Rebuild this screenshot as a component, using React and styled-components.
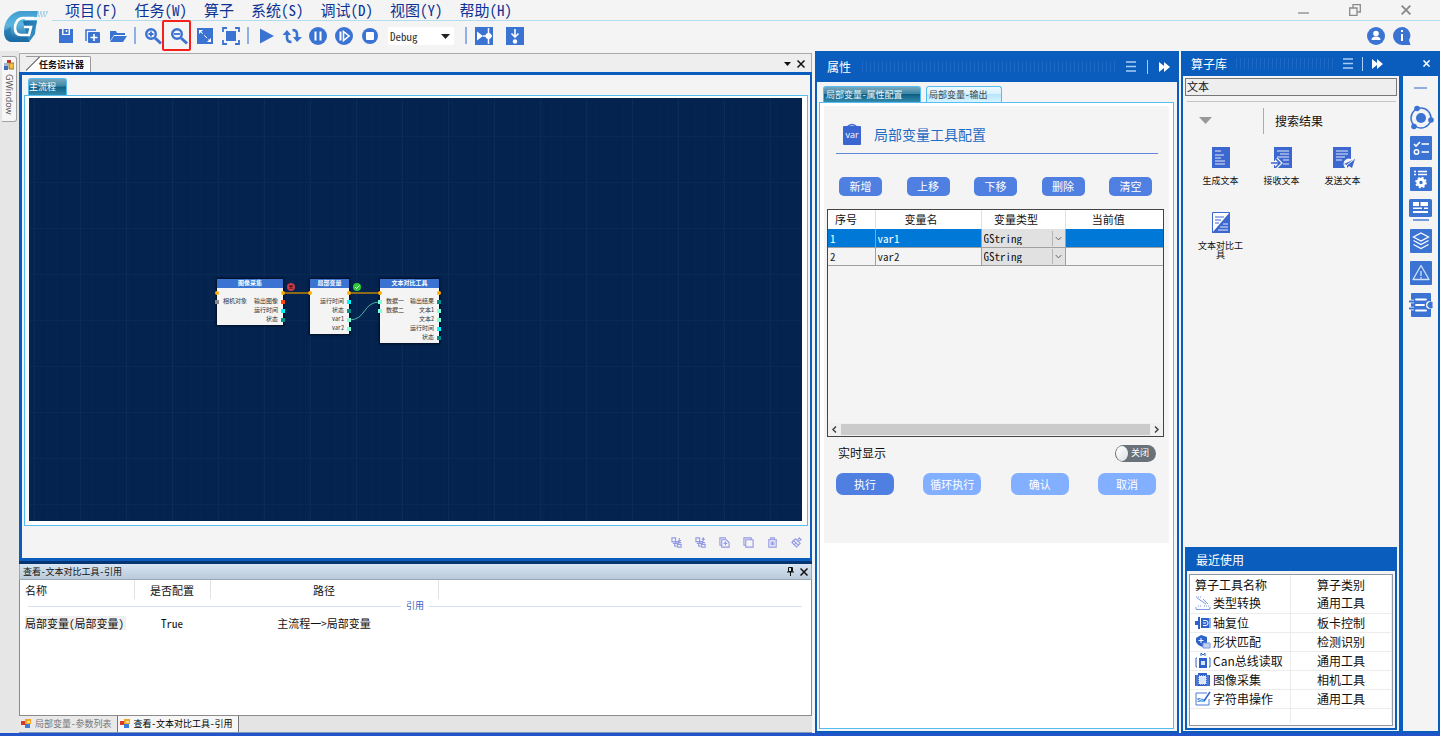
import { useState } from "react";
import styled, { createGlobalStyle, css } from "styled-components";

const BLUE = "#0a5cbd";
const ICON = "#3b73d3";
const SKY = "#56bdf3";
const PAPER = "#f4f4f4";

const GlobalStyle = createGlobalStyle`
  * { box-sizing: border-box; }
  body {
    margin: 0;
    font-family: "Noto Sans Mono CJK SC", "Noto Sans CJK SC", "Liberation Mono", monospace;
    font-size: 11px;
    line-height: 16px;
    color: #111;
    background: ${PAPER};
  }
  button, input, select {
    font: inherit;
    color: inherit;
    margin: 0;
    padding: 0;
    border: 0;
    background: none;
    border-radius: 0;
  }
  ul { list-style: none; margin: 0; padding: 0; }
  h1, h2, h3 { margin: 0; font-weight: 400; }
  svg { display: block; flex: none; }
  table { border-collapse: collapse; }
  th, td { padding: 0; font-weight: 400; }
`;

/* ---------- window ---------- */

const Window = styled.div`
  display: flex;
  flex-direction: column;
  height: 100vh;
  overflow: hidden;
  border-bottom: 3px solid #2253c9;
`;

const Header = styled.header`
  display: flex;
  height: 51px;
  flex: none;
`;

const LogoBox = styled.div`
  width: 52px;
  padding: 10px 0 0 3px;
`;

const HeaderMain = styled.div`
  flex: 1;
  display: flex;
  flex-direction: column;
`;

const MenuBar = styled.nav`
  display: flex;
  align-items: center;
  gap: 17px;
  height: 21px;
  padding-left: 13px;
  border-bottom: 1px solid #b3ddee;
`;

const MenuItem = styled.button`
  font-size: 15px;
  line-height: 20px;
  color: #0b3394;
  white-space: nowrap;
`;

const WindowControls = styled.div`
  display: flex;
  margin-left: auto;
  padding-right: 19px;
  gap: 20px;
`;

const WindowButton = styled.button`
  display: flex;
  align-items: center;
  justify-content: center;
  width: 31px;
  height: 20px;
`;

const ToolBar = styled.div`
  display: flex;
  align-items: center;
  height: 29px;
  padding-left: 1px;
`;

const ToolButton = styled.button`
  position: relative;
  display: flex;
  align-items: center;
  justify-content: center;
  width: 26px;
  height: 26px;

  ${({ $marked }) =>
    $marked &&
    css`
      &::after {
        content: "";
        position: absolute;
        inset: -3px 1px -2px -4px;
        border: 2px solid #f5201c;
        border-radius: 2px;
      }
    `}
`;

const ToolSeparator = styled.span`
  width: 2px;
  height: 17px;
  margin: 0 4px 0 3px;
  background: #8fb0e6;
`;

const StepTools = styled.div`
  display: flex;
  gap: 5px;
`;

const ModeSelect = styled.label`
  position: relative;
  display: flex;
  margin: 0 8px 0 5px;

  select {
    appearance: none;
    width: 66px;
    height: 18px;
    padding-left: 2px;
    font-size: 11px;
    line-height: 16px;
    background: #fff;
    color: #333;
  }

  svg {
    position: absolute;
    right: 4px;
    top: 7px;
    pointer-events: none;
  }
`;

const UserTools = styled.div`
  display: flex;
  margin-left: auto;
  padding-right: 25px;
`;

const Main = styled.main`
  display: flex;
  flex: 1;
  min-height: 0;
`;

/* ---------- left strip ---------- */

const SideStrip = styled.aside`
  width: 19px;
  flex: none;
  padding: 5px 0 0 2px;
  background: #e6e6e6;
`;

const SideTab = styled.button`
  display: flex;
  flex-direction: column;
  align-items: center;
  gap: 4px;
  width: 15px;
  height: 66px;
  padding-top: 3px;
  background: #f6f6f6;
  border: 1px solid #a0a0a0;
  border-left: 0;
  border-radius: 0 3px 3px 0;
  font-family: "Open Sans", sans-serif;
  font-size: 9px;
  line-height: 12px;
  color: #555;

  span { writing-mode: vertical-rl; }
`;

/* ---------- designer ---------- */

const Workspace = styled.section`
  flex: 1;
  min-width: 0;
  display: flex;
  flex-direction: column;
  padding-top: 2px;
  margin-right: 3px;
`;

const DocTabs = styled.div`
  display: flex;
  align-items: flex-end;
  height: 19px;
  padding: 0 6px;
  border: 1px solid #aaa;
  border-bottom: 0;
  background: #eee;
`;

const DocTab = styled.button`
  height: 16px;
  padding: 0 6px 0 13px;
  background: linear-gradient(135deg, transparent 9px, #888 9px, #888 10px, #fff 10px);
  border-top: 1px solid #999;
  border-right: 1px solid #999;
  border-radius: 0 2px 0 0;
  font-size: 9px;
  font-weight: 700;
  line-height: 14px;
`;

const DockControls = styled.div`
  display: flex;
  align-items: center;
  gap: 4px;
  height: 17px;
  margin-left: auto;
`;

const PlainButton = styled.button`
  display: flex;
  align-items: center;
  justify-content: center;
  min-width: 9px;
  height: 12px;
`;

const DesignerFrame = styled.div`
  flex: 1;
  min-height: 0;
  display: flex;
  flex-direction: column;
  padding: 3px 2px 0;
  border: 3px solid ${BLUE};
  border-right-width: 2px;
  background: ${PAPER};
`;

const FlowTab = styled.button`
  align-self: flex-start;
  width: 39px;
  height: 17px;
  margin-left: 4px;
  border: 1px solid ${SKY};
  border-bottom: 0;
  border-radius: 3px 3px 0 0;
  background: linear-gradient(#78a8bd, #3c86a4 45%, #0f5e84 50%, #338bab);
  color: #fff;
  font-size: 9px;
  line-height: 16px;
  text-align: left;
`;

const CanvasBox = styled.div`
  flex: 1;
  min-height: 0;
  display: flex;
  padding: 2px 5px 4px 4px;
  border: 1px solid ${SKY};
  background: #fff;
`;

const Canvas = styled.div`
  position: relative;
  flex: 1;
  overflow: hidden;
  background-color: #04244f;
  background-image:
    repeating-linear-gradient(90deg, transparent 0 5px, #0a2c57 5px 6px, transparent 6px 46px),
    repeating-linear-gradient(transparent 0 38px, #082a55 38px 39px, transparent 39px 46px),
    repeating-linear-gradient(90deg, #052651 0 1px, transparent 1px 9px);
`;

const Wires = styled.svg`
  position: absolute;
  left: 0;
  top: 0;
`;

const NodeBox = styled.article`
  position: absolute;
  top: 181px;
  left: ${({ $x }) => $x}px;
  width: ${({ $w }) => $w}px;
  padding-bottom: 1px;
  background: ${PAPER};
  box-shadow: 0 0 2px 1px #010d22;
  font-size: 6px;
  line-height: 8px;
  color: #333;
`;

const NodeTitle = styled.h3`
  height: 9px;
  background: ${ICON};
  color: #fff;
  font-size: 6px;
  font-weight: 700;
  line-height: 8px;
  text-align: center;
`;

const NodeRow = styled.div`
  position: relative;
  display: flex;
  justify-content: space-between;
  height: 9px;
  padding: 0 5px 0 6px;
`;

const Port = styled.i`
  position: absolute;
  top: 3px;
  ${({ $side }) => $side}: -2px;
  width: 4px;
  height: 4px;
  background: ${({ $color }) => $color};
  border-radius: ${({ $round }) => ($round ? "50%" : 0)};
`;

const CanvasTools = styled.div`
  display: flex;
  justify-content: flex-end;
  align-items: center;
  gap: 8px;
  height: 32px;
  padding-right: 4px;
`;

const CanvasTool = styled.button`
  display: flex;
  align-items: center;
  justify-content: center;
  width: 16px;
  height: 16px;
`;

/* ---------- reference dock ---------- */

const Dock = styled.section`
  height: 172px;
  flex: none;
  display: flex;
  flex-direction: column;
  border-top: 3px solid #073572;
`;

const DockTitle = styled.div`
  display: flex;
  align-items: center;
  justify-content: space-between;
  height: 16px;
  padding: 0 3px;
  background: linear-gradient(#d8e5f2, #b9cad9);
  border: 1px solid #9aa8b5;
  border-top: 0;
  font-size: 9px;

  div { display: flex; gap: 4px; }
`;

const DockBody = styled.div`
  flex: 1;
  background: #fff;
  border: 1px solid #8b8b8b;
  border-top: 0;
`;

const RefTable = styled.table`
  width: 100%;
  table-layout: fixed;
  font-size: 11px;
  line-height: 14px;
  text-align: center;

  thead th {
    height: 19px;
    border-right: 1px solid #e2e2e2;
  }
  thead th:last-child { border: 0; }
  th:first-child, td:first-child {
    text-align: left;
    padding-left: 5px;
  }
  tbody td { height: 19px; }
  tbody td[colspan] { height: 14px; }
`;

const GroupLine = styled.div`
  display: flex;
  align-items: center;
  gap: 5px;
  height: 13px;
  margin: 0 9px 0 3px;
  font-size: 9px;
  line-height: 12px;
  color: #2d5fc8;

  &::before, &::after {
    content: "";
    flex: 1;
    height: 1px;
    background: #d5e0f2;
  }
`;

const RowName = styled.span`
  display: inline-block;
  width: 101px;
  background: #f0f0f0;
`;

const DockTabs = styled.div`
  display: flex;
  height: 17px;
  background: #e4e4e4;
  border-bottom: 1px solid #7d99b8;
`;

const DockTab = styled.button`
  display: flex;
  align-items: center;
  gap: 4px;
  padding: 0 5px 0 2px;
  font-size: 9px;
  line-height: 14px;
  color: ${({ $active }) => ($active ? "#000" : "#777")};
  background: ${({ $active }) => ($active ? "#f6f6f6" : "#e9e9e9")};
  border-right: 1px solid #777;
`;

/* ---------- properties ---------- */

const PropertyPanel = styled.section`
  width: 364px;
  flex: none;
  display: flex;
  flex-direction: column;
  margin-right: 2px;
  border: 2px solid ${BLUE};
  border-top: 0;
  background: ${PAPER};
`;

const PanelHeader = styled.div`
  display: flex;
  align-items: center;
  gap: 11px;
  height: ${({ $h }) => $h}px;
  padding: 0 7px 0 ${({ $left }) => $left}px;
  background: ${BLUE};
  color: #fff;
`;

const PanelTitle = styled.h2`
  font-size: 12px;
  line-height: 18px;
`;

const Grip = styled.span`
  flex: 1;
  height: 11px;
  background: repeating-linear-gradient(90deg, #1e69c6 0 1px, transparent 1px 4px);
`;

const HeaderRule = styled.span`
  width: 1px;
  height: 14px;
  background: #a9cdf5;
`;

const PageTabs = styled.div`
  display: flex;
  gap: 5px;
  padding: 4px 0 0 6px;
`;

const PageTab = styled.button`
  width: ${({ $active }) => ($active ? 98 : 76)}px;
  height: 16px;
  padding-left: 2px;
  border: 1px solid ${SKY};
  border-bottom: 0;
  border-radius: 3px 3px 0 0;
  font-size: 9px;
  line-height: 15px;
  text-align: left;
  color: ${({ $active }) => ($active ? "#e8f4f8" : "#444")};
  background: ${({ $active }) =>
    $active
      ? "linear-gradient(#78a8bd, #3c86a4 45%, #0f5e84 50%, #338bab)"
      : "linear-gradient(#eefaff, #d8f2fd 45%, #b6e6fb 50%, #d9f4ff)"};
`;

const PageFrame = styled.div`
  flex: 1;
  margin: 0 3px 2px 2px;
  padding: 3px 4px;
  border: 1px solid ${SKY};
  background: #fff;
`;

const ConfigForm = styled.form`
  height: 437px;
  padding: 0 5px 0 3px;
  background: ${PAPER};
`;

const ConfigTitle = styled.div`
  display: flex;
  align-items: center;
  gap: 12px;
  height: 48px;
  margin: 0 6px 0 9px;
  padding: 8px 0 0 6px;
  border-bottom: 1px solid #5f88dc;

  h2 {
    font-size: 14px;
    line-height: 20px;
    color: #1d6cc5;
  }
`;

const RowActions = styled.div`
  display: flex;
  justify-content: space-between;
  padding: 23px 12px 13px;
`;

const SmallButton = styled.button`
  width: 43px;
  height: 19px;
  border-radius: 5px;
  background: #4f7fe0;
  color: #fff;
  line-height: 17px;
`;

const VarBox = styled.div`
  display: flex;
  flex-direction: column;
  height: 228px;
  border: 1px solid #444;
`;

const VarTable = styled.table`
  width: 100%;
  table-layout: fixed;
  font-size: 11px;
  line-height: 14px;

  th {
    height: 19px;
    padding-bottom: 2px;
    background: #fff;
    border-right: 1px solid #e0e0e0;
  }
  th:first-child { text-align: left; padding-left: 7px; }
  th:nth-child(2), th:nth-child(3) { padding-right: 14px; }
  th:last-child { padding-right: 12px; border: 0; }
`;

const VarRow = styled.tr`
  background: ${({ $selected }) => ($selected ? "#0078d7" : PAPER)};
  color: ${({ $selected }) => ($selected ? "#fff" : "#222")};

  td {
    height: 18px;
    padding-left: 2px;
    border-right: 1px solid #a0a0a0;
    border-bottom: 1px solid #a0a0a0;
  }
  td:last-child { border-right: 0; }
  td:nth-child(3) { padding: 0; background: #e1e1e1; }
`;

const TypeSelect = styled.label`
  position: relative;
  display: block;

  select {
    display: block;
    appearance: none;
    width: 100%;
    height: 16px;
    padding-left: 2px;
    background: #e1e1e1;
    color: #111;
  }
  svg {
    position: absolute;
    right: 0;
    top: 1px;
    border-left: 1px solid #b5b5b5;
    pointer-events: none;
  }
`;

const ScrollBar = styled.div`
  display: flex;
  align-items: center;
  height: 13px;
  margin-top: auto;
  background: #f0f0f0;

  div {
    flex: 1;
    height: 11px;
    background: #cbcbcb;
  }
`;

const LiveRow = styled.div`
  display: flex;
  align-items: center;
  justify-content: space-between;
  height: 33px;
  padding: 0 8px 1px 11px;
  font-size: 12px;
`;

const Toggle = styled.label`
  display: flex;
  align-items: center;
  justify-content: space-between;
  width: 41px;
  height: 17px;
  padding: 0 7px 0 1px;
  border-radius: 9px;
  background: #687278;
  color: #fff;
  font-size: 9px;

  input {
    appearance: none;
    width: 12px;
    height: 15px;
    border-radius: 50%;
    background: linear-gradient(135deg, #fff, #dde2e6);
  }
`;

const FormActions = styled.div`
  display: flex;
  justify-content: space-between;
  padding: 3px 8px 0 9px;
`;

const ActionButton = styled.button`
  width: 58px;
  height: 22px;
  border-radius: 7px;
  background: ${({ $primary }) => ($primary ? "#4f7fe0" : "#82afff")};
  color: #fff;
  line-height: 20px;
`;

/* ---------- library ---------- */

const LibraryPanel = styled.section`
  width: 259px;
  flex: none;
  display: flex;
  flex-direction: column;
  border: 2px solid ${BLUE};
  border-top: 0;
  background: ${PAPER};
`;

const LibraryHeader = styled(PanelHeader)`
  gap: 9px;

  button:last-child { margin-left: 30px; }
`;

const LibraryBody = styled.div`
  flex: 1;
  min-height: 0;
  display: flex;
`;

const LibraryMain = styled.div`
  flex: 1;
  display: flex;
  flex-direction: column;
  padding: 2px 2px 1px;
`;

const SearchInput = styled.input`
  width: 100%;
  height: 18px;
  padding: 0 1px 2px;
  border: 1px solid #777;
  background: #eee;
  line-height: 14px;
`;

const ResultHead = styled.div`
  display: flex;
  align-items: center;
  height: 38px;
  margin: 5px 1px 0 2px;
  padding-left: 12px;
  border-top: 1px solid #c4c4c4;

  h3 {
    margin-left: 51px;
    padding-left: 11px;
    border-left: 1px solid #8fb0e6;
    font-size: 12px;
    line-height: 26px;
  }
`;

const ToolGrid = styled.ul`
  display: grid;
  grid-template-columns: repeat(3, 61px);
  padding: 8px 0 0 5px;
`;

const ToolItem = styled.li`
  height: 65px;

  button {
    display: flex;
    flex-direction: column;
    align-items: center;
    width: 61px;
    gap: 7px;
    font-size: 9px;
    line-height: 9px;
  }
  span { width: 46px; }
`;

const Recent = styled.section`
  display: flex;
  flex-direction: column;
  height: 183px;
  margin-top: auto;
  border: 2px solid ${BLUE};
  border-top: 0;
  background: ${PAPER};

  h2 {
    height: 24px;
    flex: none;
    padding: 2px 0 0 9px;
    background: ${BLUE};
    color: #fff;
    font-size: 12px;
    line-height: 22px;
  }
`;

const RecentBox = styled.div`
  flex: 1;
  margin: 3px 2px 2px;
  border: 1px solid #9098a2;
  background: #fff;
`;

const RecentTable = styled.table`
  width: 100%;
  table-layout: fixed;
  font-family: "Noto Sans CJK SC", sans-serif;
  font-size: 12px;
  line-height: 18px;

  th, td {
    height: 19px;
    border-bottom: 1px solid #ececec;
    border-right: 1px solid #ececec;
    text-align: center;
    white-space: nowrap;
  }
  th { border-bottom: 0; }
  th:first-child, td:first-child { text-align: left; padding-left: 5px; }
  tr:last-child td { border-bottom: 0; height: 15px; }
`;

const RecentName = styled.span`
  display: flex;
  align-items: center;
  gap: 2px;
`;

const Rail = styled.nav`
  display: flex;
  flex-direction: column;
  align-items: center;
  width: 39px;
  padding-top: 5px;
  border-left: 4px solid ${BLUE};
`;

const RailButton = styled.button`
  display: flex;
  align-items: center;
  justify-content: center;
  width: 30px;
  height: ${({ $h }) => $h}px;
`;

const RailFold = styled(RailButton)`
  margin-bottom: 8px;
`;

/* ---------- drawings ---------- */

const Logo = () => (
  <svg width="46" height="34" viewBox="0 0 46 34">
    <defs>
      <linearGradient id="logoFill" x1="0" y1="0" x2="0" y2="1">
        <stop offset="0" stopColor="#3f9dcf" />
        <stop offset=".45" stopColor="#5cb6de" />
        <stop offset="1" stopColor="#175f9b" />
      </linearGradient>
      <linearGradient id="logoSide" x1="0" y1="0" x2="1" y2="1">
        <stop offset="0" stopColor="#1b6ba8" />
        <stop offset="1" stopColor="#3f9bd0" />
      </linearGradient>
    </defs>
    <path d="M35 1H17C8 2 1 11 1 21c0 7 3 11 8 11h17l6-8 2-14H22V7h12z" fill="url(#logoFill)" />
    <path d="M20 11h14l-3 13-5 8-2-6z" fill="url(#logoSide)" />
    <path d="M1 21c0 7 3 11 8 11h17l-2-5H12c-4 0-5-5-4-10z" fill="#1c70ac" opacity=".6" />
    <path d="M31 8H20c-5 0-8 5-8 10 0 4 2 7 6 7h8l2-8h-7" fill="none" stroke="#fff" strokeWidth="2.600" />
    <path d="M34 2h11M34 4h10M35 6h8" stroke="#74b9de" strokeDasharray="2 1" />
  </svg>
);

const toolShapes = {
  save: (
    <>
      <path d="M2 2h14v14H2z" fill={ICON} />
      <path d="M5 2v6h8V2" fill={PAPER} />
      <path d="M6.500 2v5h5V2" fill={ICON} />
      <path d="M9.500 3v2" stroke="#fff" strokeWidth="1.500" />
    </>
  ),
  add: (
    <>
      <path d="M13 3H3v11" fill="none" stroke={ICON} strokeWidth="1.500" />
      <rect x="5" y="5" width="12" height="11" rx="1" fill={ICON} />
      <path d="M11 7v7M7.500 10.500h7" stroke="#fff" strokeWidth="1.600" />
    </>
  ),
  open: <path d="M1 4h6l1 2h8v2H5l-4 6zM5 9h13l-4 6H1z" fill={ICON} />,
  zoomIn: (
    <g fill="none" stroke={ICON} strokeWidth="2.400">
      <circle cx="7" cy="7" r="4.800" />
      <path d="M11 11l6 5.500" strokeWidth="3" />
      <path d="M7 4.500v5M4.500 7h5" strokeWidth="1.800" />
    </g>
  ),
  zoomOut: (
    <g fill="none" stroke={ICON} strokeWidth="2.400">
      <circle cx="7" cy="7" r="4.800" />
      <path d="M11 11l6 5.500" strokeWidth="3" />
      <path d="M4 7h6" strokeWidth="1.800" />
    </g>
  ),
  scale: (
    <>
      <path d="M1 1h16v16H1z" fill={ICON} />
      <path d="M3 3h4L3 7zM15 15h-4l4-4z" fill="#fff" />
      <path d="M4 4l10 10" stroke="#fff" strokeDasharray="4 2" />
    </>
  ),
  fit: (
    <>
      <path d="M4 4h10v10H4z" fill={ICON} />
      <path d="M1 5V1h4M13 1h4v4M17 13v4h-4M5 17H1v-4" fill="none" stroke={ICON} strokeWidth="1.800" />
    </>
  ),
  run: <path d="M3 1.500L17 9 3 16.500z" fill={ICON} />,
  loop: (
    <>
      <path d="M4 7v4q0 4 4.500 4M14 11V7q0-4-4.500-4" fill="none" stroke={ICON} strokeWidth="2.600" />
      <path d="M-.5 8L4 3l4 5zM10 10h9l-5 5z" fill={ICON} />
    </>
  ),
  pause: (
    <>
      <circle cx="9" cy="9" r="9" fill={ICON} />
      <path d="M6.500 4.500v9M11.500 4.500v9" stroke="#fff" strokeWidth="2" />
    </>
  ),
  step: (
    <>
      <circle cx="9" cy="9" r="9" fill={ICON} />
      <path d="M5.500 4.500v9" stroke="#fff" strokeWidth="2" />
      <path d="M8.500 4.500L14 9l-5.500 4.500z" fill="none" stroke="#fff" strokeWidth="1.600" />
    </>
  ),
  stop: (
    <>
      <circle cx="9" cy="9" r="8" fill={ICON} />
      <rect x="5" y="5" width="8" height="8" rx="1" fill="#fff" />
    </>
  ),
  breakpoint: (
    <>
      <path d="M0 0h18v18H0z" fill={ICON} />
      <path d="M2 4.500L8 9l-6 4.500z" fill="#fff" />
      <path d="M13.500 1v16M8 9h9" stroke="#fff" strokeWidth="1.500" />
      <circle cx="13.500" cy="9" r="3" fill="#fff" />
    </>
  ),
  stepInto: (
    <>
      <path d="M0 0h18v18H0z" fill={ICON} />
      <path d="M9 2v8M5.500 6.500L9 10l3.500-3.500" fill="none" stroke="#fff" strokeWidth="1.600" />
      <circle cx="9" cy="14.500" r="2.200" fill="#fff" />
    </>
  ),
  user: (
    <>
      <circle cx="9" cy="9" r="9" fill={ICON} />
      <circle cx="9" cy="6.500" r="2.800" fill="#fff" />
      <path d="M4.500 13q0-3.500 4.500-3.500t4.500 3.500z" fill="#fff" />
    </>
  ),
  info: (
    <>
      <path d="M9 0a8.500 8.500 0 0 1 7 13l1.500 5H9A9 9 0 0 1 9 0z" fill={ICON} />
      <path d="M9 7v7M9 3v2" stroke="#fff" strokeWidth="2" />
    </>
  ),
};

const ToolIcon = ({ name }) => (
  <svg width="18" height="18" viewBox="0 0 18 18" overflow="visible">
    {toolShapes[name]}
  </svg>
);

const MenuLines = () => (
  <svg width="10" height="11" viewBox="0 0 10 11">
    <path d="M0 1h10M0 5.500h10M0 10h10" stroke="#a9cdf5" strokeWidth="1.400" />
  </svg>
);

const FastForward = () => (
  <svg width="11" height="10" viewBox="0 0 11 10">
    <path d="M0 0l5 4V0l6 5-6 5V6l-5 4z" fill="#fff" />
  </svg>
);

const Cross = ({ size = 8, color = "#111", width = 1.5 }) => (
  <svg width={size} height={size} viewBox="0 0 8 8">
    <path d="M.5.5l7 7M7.500.5l-7 7" stroke={color} strokeWidth={width} />
  </svg>
);

const FormIcon = () => (
  <svg width="10" height="10" viewBox="0 0 10 10">
    <path d="M0 2h5v4H0z" fill="#d8392b" />
    <path d="M4 0h6v5H4z" fill="#f5a623" />
    <path d="M4 5h5v4H4z" fill="#3d7cd8" />
    <path d="M6 2h3v2H6z" fill="#ffe08a" />
  </svg>
);

const WindowIcon = () => (
  <svg width="10" height="10" viewBox="0 0 10 10">
    <path d="M0 3h4v3H0z" fill="#9db8d8" />
    <path d="M3 0h4v3H3z" fill="#c0302b" />
    <path d="M0 6h4v4H0z" fill="#3d6cc0" />
    <path d="M5 3h5v6H5z" fill="#f0c040" stroke="#98782a" />
  </svg>
);

const canvasShapes = {
  group: <path d="M1 1h4v4H1zM5 5h3v2H5zM2 7h2v3h2M7 8h4v3H7zM9 1v5M8 4h3M8 6h3" />,
  ungroup: <path d="M1 1h4v4H1zM5 5h3v2H5zM2 7h2v3h2M7 8h4v3H7zM9 1v4M7.500 3l1.500-2 1.500 2M8 6h3" />,
  addPage: <path d="M3 9H1V1h6v1M3 3h5l3 3v5H3zM5 7h4M7 5v4" />,
  copy: <path d="M3 9H1V1h8v2M3 3h8v8H3z" />,
  trash: <path d="M1 3h10M4 3V1h4v2M2 3v8h8V3M4.500 5v4M6 5v4M7.500 5v4" />,
  brush: <path d="M5 2l5 5-4 4-5-5zM7 4l2-3 2 2-3 2M3 4l5 5M3.500 8.500l2-2M1 6l2-3" />,
};

const railShapes = {
  orbit: (
    <>
      <circle cx="12" cy="12" r="10" fill="none" stroke={ICON} strokeWidth="1.500" />
      <circle cx="12" cy="12" r="5" fill={ICON} />
      <circle cx="8" cy="2.500" r="2.800" fill={ICON} />
      <circle cx="22" cy="14" r="2.800" fill={ICON} />
      <circle cx="5" cy="20.500" r="2.800" fill={ICON} />
    </>
  ),
  checklist: (
    <>
      <rect x="1" width="22" height="24" rx="1" fill={ICON} />
      <path d="M5 8l2 2 4-4M12.500 8H20M12.500 16H20" fill="none" stroke="#fff" strokeWidth="1.600" />
      <circle cx="7.500" cy="16" r="2.200" fill="none" stroke="#fff" strokeWidth="1.500" />
    </>
  ),
  settings: (
    <>
      <rect x="1" width="22" height="24" rx="1" fill={ICON} />
      <path d="M5 4.500h2M9 4.500h9M5 7.500h2M9 7.500h9" stroke="#fff" strokeWidth="1.400" />
      <circle cx="12" cy="15.500" r="3.200" fill="none" stroke="#fff" strokeWidth="3" />
      <circle cx="12" cy="15.500" r="5" fill="none" stroke="#fff" strokeWidth="1.600" strokeDasharray="2 1.930" />
    </>
  ),
  layout: (
    <>
      <rect x="0" y="1" width="23" height="18" rx="1.500" fill={ICON} />
      <path d="M4 4h6v4H4zM11.500 4H19v4h-7.500zM4 9.500h9V11H4zM4 13h15v2H4zM15 9.500h4V11h-4z" fill="#fff" />
      <path d="M4 22h16" stroke={ICON} strokeWidth="1.400" />
    </>
  ),
  layers: (
    <>
      <rect x="1" width="22" height="24" rx="1" fill={ICON} />
      <path
        d="M12 4l7.500 4L12 12 4.500 8zM4.500 11.500l7.500 4 7.500-4M4.500 15.500l7.500 4 7.500-4"
        fill="none"
        stroke="#fff"
        strokeWidth="1.300"
      />
    </>
  ),
  warning: (
    <>
      <rect x="1" width="22" height="24" rx="1" fill={ICON} />
      <path d="M12 4.500l8 14H4zM12 10v5M12 16v1.500" fill="none" stroke="#cfe0fa" strokeWidth="1.300" strokeLinejoin="round" />
    </>
  ),
  plug: (
    <>
      <rect x="2" width="20" height="24" rx="1" fill={ICON} />
      <path d="M7 6.500h10M7 12h8M7 17.500h10" stroke="#fff" strokeWidth="1.800" strokeLinecap="round" />
      <path d="M0 8.500h5M0 15.500h5" stroke="#fff" strokeWidth="3.500" />
      <path d="M0 8.500h5M0 15.500h5" stroke={ICON} strokeWidth="1.800" />
      <circle cx="21" cy="12" r="4" fill={PAPER} />
      <path d="M23.500 9.500a3 3 0 1 0 0 5" fill={ICON} stroke={ICON} />
    </>
  ),
};

const railItems = [
  ["orbit", 29],
  ["checklist", 31],
  ["settings", 31],
  ["layout", 31],
  ["layers", 32],
  ["warning", 32],
  ["plug", 32],
];

const libraryShapes = {
  create: (
    <>
      <path d="M1 0h18v21H1z" fill="#3c67cf" />
      <path d="M4 4h6M4 8h9M4 11h6M4 14h10M4 17h10" stroke="#e3ebfb" />
    </>
  ),
  receive: (
    <>
      <path d="M2 0h18v21H2z" fill="#3c67cf" />
      <path d="M5 4h12M8 7h9M5 10h12M11 13h6M11 17h6" stroke="#e3ebfb" />
      <path d="M-1 16h8M4 12l4 4-4 4" fill="none" stroke={PAPER} strokeWidth="4" />
      <path d="M-1 16h8M4 12l4 4-4 4" fill="none" stroke="#3c67cf" strokeWidth="1.600" />
    </>
  ),
  send: (
    <>
      <path d="M0 0h18v21H0z" fill="#3c67cf" />
      <path d="M3 4h12M3 7h12M3 10h9M3 13h6" stroke="#e3ebfb" />
      <circle cx="16" cy="17" r="5.500" fill={PAPER} />
      <path d="M11 17l11-5-3 9-3-2-2 2v-3z" fill="#3c67cf" />
      <path d="M21 12.500l-7 5.500" fill="none" stroke={PAPER} />
    </>
  ),
  compare: (
    <>
      <path d="M1.500.5h17v20h-17z" fill="#fff" stroke="#3c67cf" />
      <path d="M19 0v21H1z" fill="#3c67cf" />
      <path d="M4 5h9M4 8h6M4 11h4" stroke="#3c67cf" />
      <path d="M12 12h5M9 15h8M7 18h10" stroke="#e3ebfb" />
    </>
  ),
};

const recentShapes = {
  convert: (
    <g fill="none" stroke="#7c98e2">
      <path d="M1 14.500h14M1 12v2M15 12v2M2 3l9 6M8 4l5 5" />
      <path d="M1 2h5M3 11h4M9 11h5" strokeDasharray="1 1" />
    </g>
  ),
  axis: (
    <>
      <path d="M0 6h3V2h2v12H3v-4H0zM6 3h8v10H6z" fill="#2d62cc" />
      <path d="M8 5.500h3q2 0 2 2.500t-2 2.500H8M8 8h3" fill="none" stroke="#fff" />
      <path d="M15 3v10" stroke="#2d62cc" />
    </>
  ),
  shape: (
    <>
      <path d="M1 4l5-3 6 2v6l-4 4q-5-1-7-5z" fill="#2d62cc" />
      <path d="M6 4v5M3.500 6.500h5" stroke="#fff" />
      <path d="M8 9h7v5H8z" fill="#c4d3f3" stroke="#7c98e2" />
    </>
  ),
  can: (
    <>
      <path d="M4 5h8v10H4z" fill="#2d62cc" />
      <path d="M6 3V0l2 2 2-2v3M2 5H1v9h1M14 5h1v9h-1" fill="none" stroke="#2d62cc" />
      <path d="M6 8h4v4H6z" fill="#dbe5fa" />
    </>
  ),
  camera: (
    <>
      <path d="M0 3h3V1h9v2h3v11H0z" fill="#2d62cc" />
      <path d="M4 4h7v8H4z" fill="#dbe5fa" stroke="#fff" strokeDasharray="1 1" />
      <path d="M2 3v11M13 3v11" stroke="#6c90e0" />
    </>
  ),
  string: (
    <>
      <path d="M12 2H1v12h13V8" fill="none" stroke="#4e79d6" />
      <path d="M9 10l6-9" stroke="#2d62cc" strokeWidth="1.500" />
      <text x="2" y="11" fontSize="6" fontWeight="700" fontFamily="Liberation Sans, sans-serif" fill="#2d62cc">Str</text>
    </>
  ),
};

/* ---------- data ---------- */

const menus = ["项目(F)", "任务(W)", "算子", "系统(S)", "调试(D)", "视图(Y)", "帮助(H)"];

const tools = ["save", "add", "open", "|", "zoomIn", "zoomOut", "scale", "fit", "|", "run", "loop", "pause", "step", "stop"];

const MINT = "#7dffd4";
const CYAN = "#00f6ff";
const TEAL = "#078d8a";

const nodes = [
  {
    title: "图像采集",
    x: 188,
    w: 66,
    rows: [
      ["相机对象", "#888", "输出图像", "#ff4500"],
      ["", "", "运行时间", CYAN],
      ["", "", "状态", TEAL],
    ],
  },
  {
    title: "局部变量",
    x: 281,
    w: 39,
    rows: [
      ["", "", "运行时间", CYAN],
      ["", "", "状态", TEAL],
      ["", "", "var1", MINT],
      ["", "", "var2", MINT],
    ],
  },
  {
    title: "文本对比工具",
    x: 351,
    w: 59,
    rows: [
      ["数据一", MINT, "输出结果", TEAL],
      ["数据二", MINT, "文本1", MINT],
      ["", "", "文本2", MINT],
      ["", "", "运行时间", CYAN],
      ["", "", "状态", TEAL],
    ],
  },
];

const library = [
  ["生成文本", "create"],
  ["接收文本", "receive"],
  ["发送文本", "send"],
  ["文本对比工具", "compare"],
];

const recents = [
  ["类型转换", "通用工具", "convert"],
  ["轴复位", "板卡控制", "axis"],
  ["形状匹配", "检测识别", "shape"],
  ["Can总线读取", "通用工具", "can"],
  ["图像采集", "相机工具", "camera"],
  ["字符串操作", "通用工具", "string"],
];

/* ---------- parts ---------- */

const FlowNode = ({ node }) => (
  <NodeBox $x={node.x} $w={node.w}>
    <NodeTitle>{node.title}</NodeTitle>
    <NodeRow>
      <Port $side="left" $color="#ffae00" $round />
      <Port $side="right" $color="#ffae00" $round />
    </NodeRow>
    {node.rows.map(([input, inColor, output, outColor]) => (
      <NodeRow key={output}>
        <span>{input}</span>
        <span>{output}</span>
        {input && <Port $side="left" $color={inColor} />}
        <Port $side="right" $color={outColor} />
      </NodeRow>
    ))}
  </NodeBox>
);

const Designer = () => (
  <>
    <DocTabs>
      <DocTab>任务设计器</DocTab>
      <DockControls>
        <PlainButton aria-label="窗口列表">
          <svg width="7" height="4" viewBox="0 0 7 4"><path d="M0 0h7L3.500 4z" fill="#111" /></svg>
        </PlainButton>
        <PlainButton aria-label="关闭"><Cross /></PlainButton>
      </DockControls>
    </DocTabs>
    <DesignerFrame>
      <FlowTab>主流程</FlowTab>
      <CanvasBox>
        <Canvas>
          <Wires width="420" height="260" viewBox="0 0 420 260">
            <path d="M254 195h27M320 195h31" stroke="#b98209" strokeWidth="1.500" />
            <path d="M320 222c18 0 13-18 31-18" fill="none" stroke="#4fae9f" />
            <circle cx="262" cy="189" r="4" fill="#c43a45" />
            <path d="M260.500 187.500l3 3M263.500 187.500l-3 3" stroke="#4a0d18" strokeWidth="1.200" />
            <circle cx="328" cy="189" r="4" fill="#2dcb35" />
            <path d="M326 189l1.500 1.500 3-3" fill="none" stroke="#fff" />
          </Wires>
          {nodes.map((node) => (
            <FlowNode key={node.title} node={node} />
          ))}
        </Canvas>
      </CanvasBox>
      <CanvasTools>
        {Object.keys(canvasShapes).map((name) => (
          <CanvasTool key={name} aria-label={name}>
            <svg width="11" height="11" viewBox="0 0 12 12" fill="none" stroke="#9299e6" strokeWidth="1.200">
              {canvasShapes[name]}
            </svg>
          </CanvasTool>
        ))}
      </CanvasTools>
    </DesignerFrame>
  </>
);

const ReferenceDock = () => (
  <Dock>
    <DockTitle>
      查看-文本对比工具-引用
      <div>
        <PlainButton aria-label="固定">
          <svg width="7" height="9" viewBox="0 0 7 9">
            <path d="M1.500.5h4v4h-4zM0 5h7M3.500 5v4M4.500.5v4" fill="none" stroke="#111" />
          </svg>
        </PlainButton>
        <PlainButton aria-label="关闭"><Cross /></PlainButton>
      </div>
    </DockTitle>
    <DockBody>
      <RefTable>
        <colgroup>
          <col width="114" />
          <col width="76" />
          <col width="228" />
          <col />
        </colgroup>
        <thead>
          <tr>
            <th>名称</th>
            <th>是否配置</th>
            <th>路径</th>
            <th />
          </tr>
        </thead>
        <tbody>
          <tr>
            <td colSpan="4"><GroupLine>引用</GroupLine></td>
          </tr>
          <tr>
            <td><RowName>局部变量(局部变量)</RowName></td>
            <td>True</td>
            <td>主流程一&gt;局部变量</td>
            <td />
          </tr>
        </tbody>
      </RefTable>
    </DockBody>
    <DockTabs>
      <DockTab><FormIcon />局部变量-参数列表</DockTab>
      <DockTab $active><FormIcon />查看-文本对比工具-引用</DockTab>
    </DockTabs>
  </Dock>
);

const Properties = () => {
  const [selected, setSelected] = useState("var1");

  return (
    <PropertyPanel>
      <PanelHeader $h={31} $left={10}>
        <PanelTitle>属性</PanelTitle>
        <Grip />
        <PlainButton aria-label="菜单"><MenuLines /></PlainButton>
        <HeaderRule />
        <PlainButton aria-label="收起"><FastForward /></PlainButton>
      </PanelHeader>
      <PageTabs>
        <PageTab $active>局部变量-属性配置</PageTab>
        <PageTab>局部变量-输出</PageTab>
      </PageTabs>
      <PageFrame>
        <ConfigForm onSubmit={(e) => e.preventDefault()}>
          <ConfigTitle>
            <svg width="20" height="22" viewBox="0 0 20 22">
              <path d="M5 4q5-5 10 0" fill="none" stroke="#3a66d2" strokeWidth="1.500" />
              <rect x="1" y="3" width="18" height="19" rx="1" fill="#3a66d2" />
              <text x="10" y="15" textAnchor="middle" fontSize="9" fontFamily="Open Sans, sans-serif" fill="#fff">var</text>
            </svg>
            <h2>局部变量工具配置</h2>
          </ConfigTitle>
          <RowActions>
            {["新增", "上移", "下移", "删除", "清空"].map((label) => (
              <SmallButton key={label} type="button">{label}</SmallButton>
            ))}
          </RowActions>
          <VarBox>
            <VarTable>
              <colgroup>
                <col width="47" />
                <col width="106" />
                <col width="84" />
                <col />
              </colgroup>
              <thead>
                <tr>
                  <th>序号</th>
                  <th>变量名</th>
                  <th>变量类型</th>
                  <th>当前值</th>
                </tr>
              </thead>
              <tbody>
                {["var1", "var2"].map((name, i) => (
                  <VarRow key={name} $selected={selected === name} onClick={() => setSelected(name)}>
                    <td>{i + 1}</td>
                    <td>{name}</td>
                    <td>
                      <TypeSelect>
                        <select aria-label={`${name} 变量类型`}>
                          <option>GString</option>
                        </select>
                        <svg width="13" height="15" viewBox="0 0 13 15">
                          <path d="M3 6l3 3 3-3" fill="none" stroke="#555" />
                        </svg>
                      </TypeSelect>
                    </td>
                    <td />
                  </VarRow>
                ))}
              </tbody>
            </VarTable>
            <ScrollBar>
              <svg width="13" height="13" viewBox="0 0 13 13">
                <path d="M8 3.500l-3 3 3 3" fill="none" stroke="#444" strokeWidth="1.500" />
              </svg>
              <div />
              <svg width="13" height="13" viewBox="0 0 13 13">
                <path d="M5 3.500l3 3-3 3" fill="none" stroke="#444" strokeWidth="1.500" />
              </svg>
            </ScrollBar>
          </VarBox>
          <LiveRow>
            实时显示
            <Toggle>
              <input type="checkbox" aria-label="实时显示" />
              关闭
            </Toggle>
          </LiveRow>
          <FormActions>
            <ActionButton $primary>执行</ActionButton>
            <ActionButton type="button">循环执行</ActionButton>
            <ActionButton type="button">确认</ActionButton>
            <ActionButton type="button">取消</ActionButton>
          </FormActions>
        </ConfigForm>
      </PageFrame>
    </PropertyPanel>
  );
};

const Library = () => (
  <LibraryPanel>
    <LibraryHeader $h={25} $left={8}>
      <PanelTitle>算子库</PanelTitle>
      <Grip />
      <PlainButton aria-label="菜单"><MenuLines /></PlainButton>
      <HeaderRule />
      <PlainButton aria-label="收起"><FastForward /></PlainButton>
      <PlainButton aria-label="关闭"><Cross size={7} color="#fff" width={1.8} /></PlainButton>
    </LibraryHeader>
    <LibraryBody>
      <LibraryMain>
        <SearchInput defaultValue="文本" aria-label="搜索算子" />
        <ResultHead>
          <svg width="13" height="7" viewBox="0 0 13 7"><path d="M0 0h13L6.500 7z" fill="#999" /></svg>
          <h3>搜索结果</h3>
        </ResultHead>
        <ToolGrid>
          {library.map(([label, name]) => (
            <ToolItem key={name}>
              <button>
                <svg width="20" height="22" viewBox="0 0 20 22" overflow="visible">{libraryShapes[name]}</svg>
                <span>{label}</span>
              </button>
            </ToolItem>
          ))}
        </ToolGrid>
        <Recent>
          <h2>最近使用</h2>
          <RecentBox>
            <RecentTable>
              <thead>
                <tr>
                  <th>算子工具名称</th>
                  <th>算子类别</th>
                </tr>
              </thead>
              <tbody>
                {recents.map(([name, kind, icon]) => (
                  <tr key={name}>
                    <td>
                      <RecentName>
                        <svg width="16" height="16" viewBox="0 0 16 16">{recentShapes[icon]}</svg>
                        {name}
                      </RecentName>
                    </td>
                    <td>{kind}</td>
                  </tr>
                ))}
                <tr>
                  <td />
                  <td />
                </tr>
              </tbody>
            </RecentTable>
          </RecentBox>
        </Recent>
      </LibraryMain>
      <Rail>
        <RailFold $h={14} aria-label="折叠">
          <svg width="13" height="2" viewBox="0 0 13 2"><path d="M0 1h13" stroke="#6f95dc" strokeWidth="1.500" /></svg>
        </RailFold>
        {railItems.map(([name, height]) => (
          <RailButton key={name} $h={height} aria-label={name}>
            <svg width="24" height="24" viewBox="0 0 24 24" overflow="visible">{railShapes[name]}</svg>
          </RailButton>
        ))}
      </Rail>
    </LibraryBody>
  </LibraryPanel>
);

const App = () => {
  return (
    <Window>
      <GlobalStyle />
      <Header>
        <LogoBox><Logo /></LogoBox>
        <HeaderMain>
          <MenuBar>
            {menus.map((label) => (
              <MenuItem key={label}>{label}</MenuItem>
            ))}
            <WindowControls>
              <WindowButton aria-label="最小化">
                <svg width="12" height="10" viewBox="0 0 12 10"><path d="M0 8h11" stroke="#999" strokeWidth="1.500" /></svg>
              </WindowButton>
              <WindowButton aria-label="还原">
                <svg width="12" height="12" viewBox="0 0 12 12">
                  <path d="M4 4V.7h7.300V8H8M.7 4H8v7.300H.7z" fill="none" stroke="#8a8a8a" strokeWidth="1.300" />
                </svg>
              </WindowButton>
              <WindowButton aria-label="关闭"><Cross size={10} color="#8a8a8a" width={1.5} /></WindowButton>
            </WindowControls>
          </MenuBar>
          <ToolBar>
            {tools.map((name, i) =>
              name === "|" ? (
                <ToolSeparator key={i} />
              ) : (
                <ToolButton key={name} aria-label={name} $marked={name === "zoomOut"}>
                  <ToolIcon name={name} />
                </ToolButton>
              )
            )}
            <ModeSelect>
              <select aria-label="运行模式">
                <option>Debug</option>
              </select>
              <svg width="9" height="5" viewBox="0 0 9 5"><path d="M0 0h9L4.500 5z" fill="#222" /></svg>
            </ModeSelect>
            <ToolSeparator />
            <StepTools>
              <ToolButton aria-label="breakpoint"><ToolIcon name="breakpoint" /></ToolButton>
              <ToolButton aria-label="stepInto"><ToolIcon name="stepInto" /></ToolButton>
            </StepTools>
            <UserTools>
              <ToolButton aria-label="user"><ToolIcon name="user" /></ToolButton>
              <ToolButton aria-label="info"><ToolIcon name="info" /></ToolButton>
            </UserTools>
          </ToolBar>
        </HeaderMain>
      </Header>
      <Main>
        <SideStrip>
          <SideTab>
            <WindowIcon />
            <span>GWindow</span>
          </SideTab>
        </SideStrip>
        <Workspace>
          <Designer />
          <ReferenceDock />
        </Workspace>
        <Properties />
        <Library />
      </Main>
    </Window>
  );
};

export default App;
